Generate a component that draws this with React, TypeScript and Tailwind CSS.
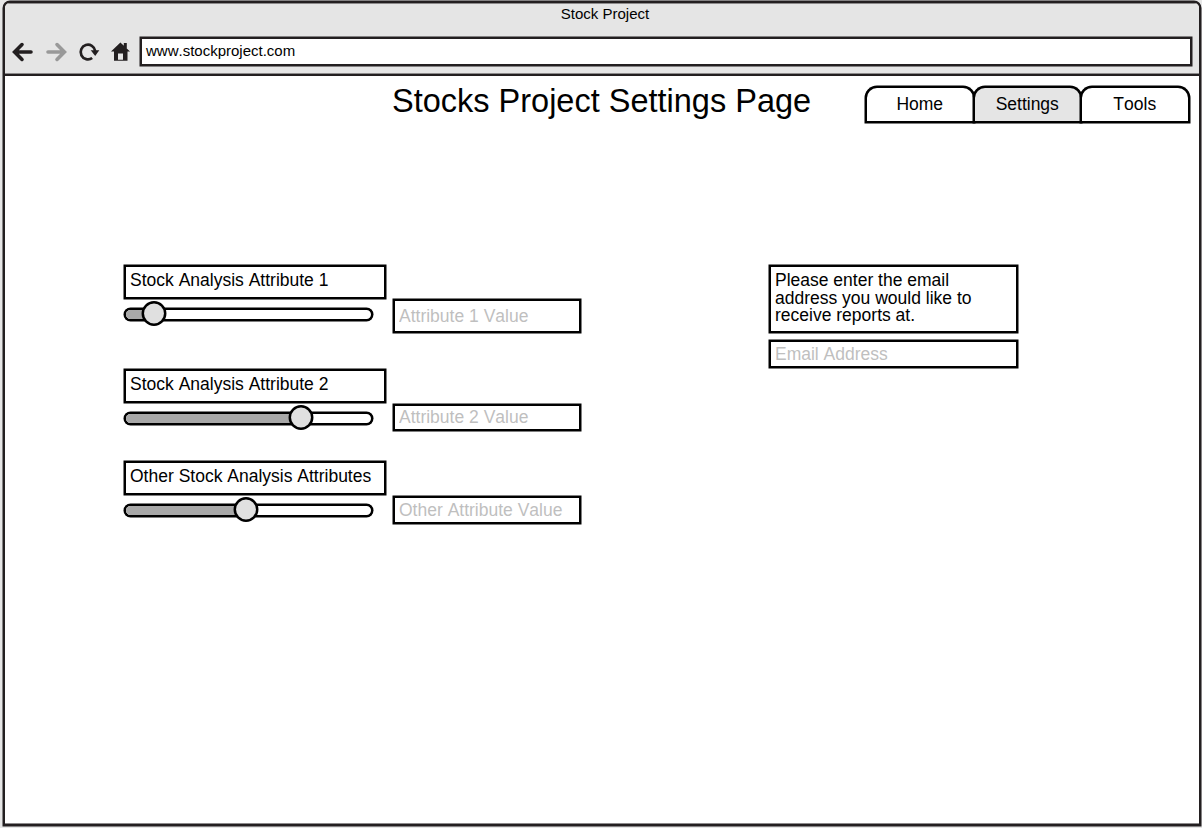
import React from "react";

const box = "border-2 border-black bg-white shadow-[0_0_0_0.5px_#000]";

function Tab({ label, active }: { label: string; active?: boolean }) {
  return (
    <button
      className={`-mr-[2px] flex h-[37px] w-[109.5px] items-center justify-center rounded-t-[12px] border-2 border-black pb-[2px] shadow-[0_0_0_0.5px_#000] ${active ? "bg-[#e5e5e5]" : "bg-white"}`}
    >
      {label}
    </button>
  );
}

function Slider({ value }: { value: number }) {
  return (
    <div className="relative mt-[2px] flex h-[26px] w-[249px] items-center">
      <div className="h-[13px] w-full overflow-hidden rounded-full border-2 border-black bg-white shadow-[0_0_0_0.5px_#000]">
        <div className="h-full bg-[#a8a8a8]" style={{ width: value }} />
      </div>
      <svg className="absolute top-0 h-[26px] w-[26px]" style={{ left: value - 13 }} viewBox="0 0 26 26">
        <circle cx="13" cy="12.5" r="11.2" fill="#e0e0e0" stroke="#000" strokeWidth="2.5" />
      </svg>
    </div>
  );
}

function Attribute({
  label,
  value,
  placeholder,
  className,
  inputClass,
}: {
  label: string;
  value: number;
  placeholder: string;
  className: string;
  inputClass: string;
}) {
  return (
    <div className={`flex items-start ${className}`}>
      <div className="w-[269px] shrink-0">
        <div className={`h-[34px] w-[262px] whitespace-nowrap pl-[4px] pt-[3px] ${box}`}>{label}</div>
        <Slider value={value} />
      </div>
      <input
        placeholder={placeholder}
        className={`w-[188px] pl-[4px] outline-none placeholder:text-[#bfbfbf] placeholder:opacity-100 ${inputClass} ${box}`}
      />
    </div>
  );
}

export default function App() {
  return (
    <div className="h-[828px] w-[1202px] overflow-hidden bg-[#e6e6e6] pl-[3px] pt-[1px] font-['Liberation_Sans',Arial,sans-serif] text-[17.5px] leading-[20px] text-black [font-kerning:none]">
      <div className="flex h-[825px] w-[1198px] flex-col overflow-hidden rounded-t-[7px] border-2 border-[#231f20] bg-white shadow-[0_0_0_0.5px_#231f20]">
        <header className="h-[73px] shrink-0 border-b-2 border-[#231f20] bg-[#e5e5e5] text-[15px] leading-[17px] shadow-[inset_0_1px_0_#8c8a8b,inset_0_-1px_0_#8c8a8b]">
          <div className="pl-[6px] pt-[2px] text-center">Stock Project</div>
          <div className="mt-[14px] flex h-[30px] items-center">
            <svg className="h-[30px] w-[135px] shrink-0" viewBox="5 36 135 30" fill="none">
              <path d="M31 52H15M22 44.6L14.6 52L22 59.4" stroke="#231f20" strokeWidth="3.6" strokeLinecap="round" />
              <path d="M48 52H64M57 44.6L64.4 52L57 59.4" stroke="#999" strokeWidth="3.6" strokeLinecap="round" />
              <path d="M92.2 58A7.3 7.3 0 1 1 95.2 51" stroke="#231f20" strokeWidth="2.7" />
              <path d="M90.7 50.2H99.3L95.2 56Z" fill="#231f20" />
              <path d="M120.4 42.5L130 51.5H127.5V60.7H114V51.5H111L120.4 42.5ZM123.8 43H126.8V49H123.8Z" fill="#231f20" />
              <path d="M118 53.5H123V59.7H118Z" fill="#e5e5e5" />
            </svg>
            <div className="h-[29px] w-[1052px] border-2 border-[#231f20] bg-white pl-[4px] pt-[3px] shadow-[0_0_0_0.5px_#231f20]">
              www.stockproject.com
            </div>
          </div>
        </header>
        <main className="flex-1 shadow-[inset_0_-1px_0_#8c8a8b]">
          <div className="flex h-[189px] items-start">
            <h1 className="ml-[387px] mt-[6px] w-[473px] whitespace-nowrap text-[32.5px] leading-[38px]">
              Stocks Project Settings Page
            </h1>
            <nav className="mt-[10px] flex">
              <Tab label="Home" />
              <Tab label="Settings" active />
              <Tab label="Tools" />
            </nav>
          </div>
          <div className="flex items-start pl-[119px]">
            <section className="w-[645px]">
              <Attribute label="Stock Analysis Attribute 1" value={30} placeholder="Attribute 1 Value" className="h-[104px]" inputClass="mt-[34px] h-[34px]" />
              <Attribute label="Stock Analysis Attribute 2" value={177} placeholder="Attribute 2 Value" className="h-[92px]" inputClass="mt-[35px] h-[27px]" />
              <Attribute label="Other Stock Analysis Attributes" value={122} placeholder="Other Attribute Value" className="h-[92px]" inputClass="mt-[35px] h-[28px]" />
            </section>
            <section>
              <p className={`h-[68px] w-[249px] pl-[4px] pt-[5px] leading-[17.5px] ${box}`}>
                Please enter the email
                <br />
                address you would like to
                <br />
                receive reports at.
              </p>
              <input
                placeholder="Email Address"
                className={`mt-[7px] block h-[28px] w-[249px] pl-[4px] outline-none placeholder:text-[#bfbfbf] placeholder:opacity-100 ${box}`}
              />
            </section>
          </div>
        </main>
      </div>
    </div>
  );
}
